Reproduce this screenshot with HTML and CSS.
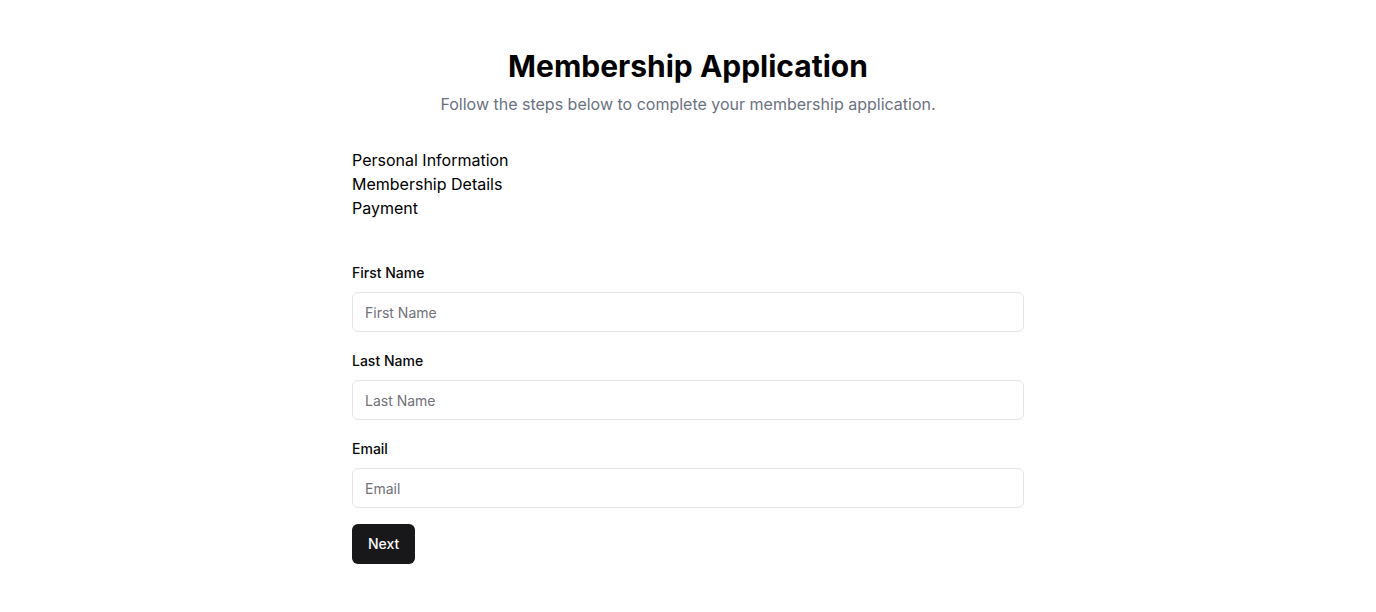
FILE: index.html
```html
<!DOCTYPE html>
<html lang="en">
<head>
<meta charset="utf-8">
<title>Membership Application</title>
<link rel="stylesheet" href="styles.css">
</head>
<body>
<main class="page">
  <header class="head">
    <h1 class="title">Membership Application</h1>
    <p class="subtitle">Follow the steps below to complete your membership application.</p>
  </header>
  <ol class="steps">
    <li>Personal Information</li>
    <li>Membership Details</li>
    <li>Payment</li>
  </ol>
  <form class="form">
    <div class="field">
      <label class="label" for="first">First Name</label>
      <input class="input" id="first" type="text" placeholder="First Name">
    </div>
    <div class="field">
      <label class="label" for="last">Last Name</label>
      <input class="input" id="last" type="text" placeholder="Last Name">
    </div>
    <div class="field">
      <label class="label" for="email">Email</label>
      <input class="input" id="email" type="email" placeholder="Email">
    </div>
    <div class="actions">
      <button class="btn" type="button">Next</button>
    </div>
  </form>
</main>
</body>
</html>
```
FILE: styles.css
```css
* { box-sizing: border-box; }
html, body { margin: 0; padding: 0; background: #ffffff; }
body {
  font-family: Inter, "Noto Sans", sans-serif;
  color: #09090b;
}
.page {
  width: 672px;
  margin: 0 auto;
  padding-top: 48px;
}
.head { text-align: center; }
.title {
  margin: 0;
  font-size: 30px;
  line-height: 36px;
  font-weight: 700;
  color: #000;
}
.subtitle {
  margin: 8px 0 0;
  font-size: 16px;
  line-height: 24px;
  color: #6b7280;
}
.steps {
  list-style: none;
  margin: 32px 0 0;
  padding: 0;
  font-size: 16px;
  line-height: 24px;
  color: #000;
}
.form {
  margin-top: 43px;
  display: flex;
  flex-direction: column;
  gap: 19px;
}
.field {
  display: flex;
  flex-direction: column;
  gap: 9px;
}
.label {
  font-size: 14px;
  line-height: 20px;
  font-weight: 500;
  color: #09090b;
}
.input {
  height: 40px;
  width: 100%;
  border: 1px solid #e4e4e7;
  border-radius: 6px;
  padding: 0 12px;
  font-family: inherit;
  font-size: 14px;
  color: #09090b;
  background: #fff;
  outline: none;
}
.input::placeholder { color: #71717a; }
.actions { margin-top: -3px; }
.btn {
  height: 40px;
  padding: 0 16px 1px;
  border: 0;
  border-radius: 6px;
  background: #18181b;
  color: #fafafa;
  font-family: inherit;
  font-size: 14px;
  font-weight: 500;
}
```
